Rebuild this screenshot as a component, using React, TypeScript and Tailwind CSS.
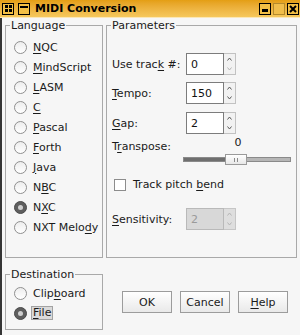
import React from "react";

const langs: { pre: string; key: string; post: string; checked?: boolean }[] = [
  { pre: "", key: "N", post: "QC" },
  { pre: "", key: "M", post: "indScript" },
  { pre: "", key: "L", post: "ASM" },
  { pre: "", key: "C", post: "" },
  { pre: "", key: "P", post: "ascal" },
  { pre: "", key: "F", post: "orth" },
  { pre: "", key: "J", post: "ava" },
  { pre: "N", key: "B", post: "C" },
  { pre: "N", key: "X", post: "C", checked: true },
  { pre: "NXT Melo", key: "d", post: "y" },
];

function K({ children }: { children: React.ReactNode }) {
  return <span className="underline underline-offset-[2px] decoration-1">{children}</span>;
}

function Radio({ checked }: { checked?: boolean }) {
  if (checked) {
    return (
      <span className="w-[13px] h-[13px] shrink-0 rounded-full bg-[#5e5e5e] border border-[#4a4a4a] flex items-center justify-center">
        <span className="w-[5px] h-[5px] rounded-full bg-[#cfcfcf]" />
      </span>
    );
  }
  return <span className="w-[13px] h-[13px] shrink-0 rounded-full border border-[#8f8f8f] bg-linear-to-b from-[#ededed] to-white" />;
}

function Arrow({ up, color }: { up?: boolean; color: string }) {
  return (
    <svg width="5" height="4" viewBox="0 0 5 4">
      <polyline
        points={up ? "0.5,3.5 2.5,1 4.5,3.5" : "0.5,0.5 2.5,3 4.5,0.5"}
        fill="none"
        stroke={color}
        strokeWidth="1"
      />
    </svg>
  );
}

function Spin({ value, disabled, downOff }: { value: string; disabled?: boolean; downOff?: boolean }) {
  return (
    <div className="flex w-[50px] h-[22px]">
      <div
        className={`w-[38px] h-full flex items-center pl-[4px] border ${
          disabled ? "border-[#b9b9b9] bg-[#d8d8d8] text-[#9a9a9a]" : "border-[#7c7c7c] bg-white text-[#111]"
        }`}
      >
        {value}
      </div>
      <div
        className={`w-[12px] h-full flex flex-col border border-l-0 ${
          disabled ? "border-[#c6c6c6] bg-[#dedede]" : "border-[#c2c2c2] bg-[#f2f2f2]"
        }`}
      >
        <div className="flex-1 flex items-center justify-center">
          <Arrow up color={disabled ? "#b4b4b4" : "#5a5a5a"} />
        </div>
        <div className="flex-1 flex items-center justify-center">
          <Arrow color={disabled || downOff ? "#b4b4b4" : "#5a5a5a"} />
        </div>
      </div>
    </div>
  );
}

function TitleBtn({ children, plain }: { children?: React.ReactNode; plain?: boolean }) {
  return (
    <div
      className={`w-[12px] h-[12px] relative flex items-center justify-center border ${
        plain ? "border-[#b48a2c] bg-[#f1be4b]" : "border-black bg-[#f3bf45]"
      }`}
    >
      {children}
    </div>
  );
}

function Btn({ children }: { children: React.ReactNode }) {
  return (
    <button className="w-[50px] h-[22px] border border-[#9c9c9c] bg-linear-to-b from-white to-[#e9e9e9] text-[#1a1a1a] flex items-center justify-center">
      {children}
    </button>
  );
}

export default function App() {
  return (
    <div className="w-[300px] h-[335px] flex flex-col overflow-hidden font-['DejaVu_Sans','Liberation_Sans',sans-serif] text-[11px] leading-[13px] text-[#1a1a1a]">
      {/* Title bar */}
      <div className="h-[18px] shrink-0 flex items-center bg-linear-to-b from-[#e49e12] to-[#f6c85c] border-b border-[#fbe7b8]">
        <div className="flex gap-[4px] pl-[2px]">
          <TitleBtn>
            <div className="grid grid-cols-2 gap-[1px]">
              <span className="w-[3px] h-[3px] bg-black" />
              <span className="w-[3px] h-[3px] bg-black" />
              <span className="w-[3px] h-[3px] bg-black" />
              <span className="w-[3px] h-[3px] bg-black" />
            </div>
          </TitleBtn>
          <TitleBtn>
            <span className="absolute top-[2px] left-[1px] w-[8px] h-[2px] bg-black" />
          </TitleBtn>
        </div>
        <span className="ml-[5px] font-bold text-black">MIDI Conversion</span>
        <div className="ml-auto flex gap-[2px] pr-[1px]">
          <TitleBtn>
            <span className="absolute bottom-[2px] left-[2px] w-[6px] h-[3px] bg-black" />
          </TitleBtn>
          <TitleBtn plain />
          <TitleBtn>
            <svg width="8" height="8" viewBox="0 0 8 8">
              <path d="M1 1 L7 7 M7 1 L1 7" stroke="black" strokeWidth="2" />
            </svg>
          </TitleBtn>
        </div>
      </div>

      {/* Body */}
      <div className="flex-1 bg-[#f6f6f6] border-l-2 border-[#353535] pl-[3px] pt-px">
        <div className="flex gap-[3px]">
          {/* Language */}
          <fieldset className="w-[98px] h-[239px] border border-[#a9a9a9]">
            <legend className="ml-[4px] px-[1px] leading-[13px]">Language</legend>
            <div className="flex flex-col pt-[5px] pl-[8px]">
              {langs.map((l) => (
                <div key={l.pre + l.key + l.post} className="h-5 flex items-center gap-[6px]">
                  <Radio checked={l.checked} />
                  <span>
                    {l.pre}
                    <K>{l.key}</K>
                    {l.post}
                  </span>
                </div>
              ))}
            </div>
          </fieldset>

          {/* Parameters */}
          <fieldset className="w-[191px] h-[239px] border border-[#a9a9a9]">
            <legend className="ml-[4px] px-[1px] leading-[13px]">Parameters</legend>
            <div className="flex flex-col pt-[21px] pl-[5px] pr-[5px]">
              <div className="flex items-center h-[22px]">
                <span className="w-[74px]">
                  Use trac<K>k</K> #:
                </span>
                <Spin value="0" downOff />
              </div>
              <div className="flex items-center h-[22px] mt-[7px]">
                <span className="w-[74px]">
                  <K>T</K>empo:
                </span>
                <Spin value="150" />
              </div>
              <div className="flex items-center h-[22px] mt-[8px]">
                <span className="w-[74px]">
                  <K>G</K>ap:
                </span>
                <Spin value="2" />
              </div>
              <div className="flex mt-[2px]">
                <span className="mt-[4px]">
                  T<K>r</K>anspose:
                </span>
                <div className="ml-auto w-[108px] flex flex-col">
                  <span className="text-center pl-[2px]">0</span>
                  <div className="relative h-[11px] mt-[5px] flex items-center">
                    <div className="w-full h-[5px] flex border border-[#8a8a8a]">
                      <div className="w-[53px] bg-[#6f6f6f]" />
                      <div className="flex-1 bg-[#b6b6b6]" />
                    </div>
                    <div className="absolute left-[42px] top-0 w-[22px] h-[11px] border border-[#9a9a9a] bg-linear-to-b from-white to-[#e8e8e8] flex items-center justify-center gap-[2px]">
                      <span className="w-px h-[4px] bg-[#8a8a8a]" />
                      <span className="w-px h-[4px] bg-[#8a8a8a]" />
                    </div>
                  </div>
                </div>
              </div>
              <div className="flex items-center mt-[13px] ml-[2px]">
                <span className="w-[12px] h-[12px] border border-[#8c8c8c] bg-white" />
                <span className="ml-[7px]">
                  Track pitch <K>b</K>end
                </span>
              </div>
              <div className="flex items-center h-[22px] mt-[17px]">
                <span className="w-[74px]">
                  <K>S</K>ensitivity:
                </span>
                <Spin value="2" disabled />
              </div>
            </div>
          </fieldset>
        </div>

        <div className="flex mt-[10px]">
          {/* Destination */}
          <fieldset className="w-[98px] h-[62px] border border-[#a9a9a9]">
            <legend className="ml-[4px] px-[1px] leading-[13px]">Destination</legend>
            <div className="flex flex-col pt-[2px] pl-[8px]">
              <div className="h-5 flex items-center gap-[6px]">
                <Radio />
                <span>
                  Clip<K>b</K>oard
                </span>
              </div>
              <div className="h-5 flex items-center gap-[4px]">
                <Radio checked />
                <span className="border border-[#a2a2a2] bg-[#dadada] px-px leading-[12px]">
                  <K>F</K>ile
                </span>
              </div>
            </div>
          </fieldset>

          <div className="flex gap-2 ml-[19px] mt-[23px] self-start">
            <Btn>OK</Btn>
            <Btn>Cancel</Btn>
            <Btn>
              <span>
                <K>H</K>elp
              </span>
            </Btn>
          </div>
        </div>
      </div>
    </div>
  );
}
